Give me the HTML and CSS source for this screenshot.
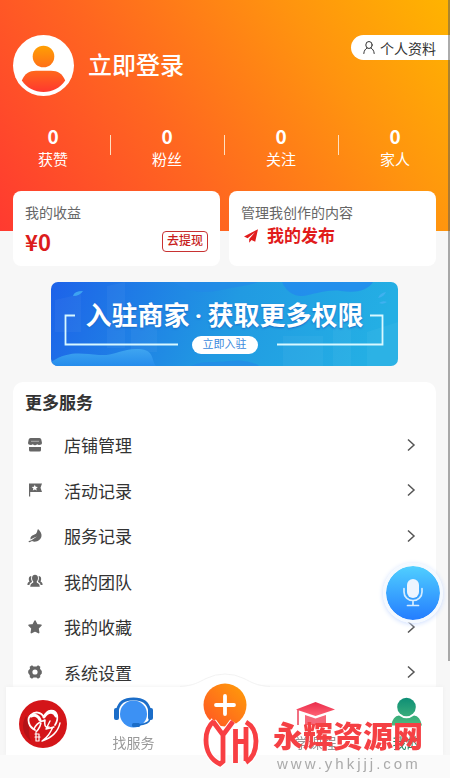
FILE: index.html
```html
<!DOCTYPE html>
<html lang="zh-CN">
<head>
<meta charset="utf-8">
<meta name="viewport" content="width=device-width, initial-scale=1">
<title>我的</title>
<link rel="stylesheet" href="styles.css">
</head>
<body>
<header class="hero">
  <div class="account">
    <svg class="avatar" viewBox="0 0 61 61" aria-hidden="true">
      <defs><linearGradient id="warm" x1="0" y1="0" x2="0" y2="61" gradientUnits="userSpaceOnUse"><stop offset=".2" stop-color="#ff9d05"/><stop offset=".9" stop-color="#ff3c2d"/></linearGradient></defs>
      <circle cx="30.500" cy="30.500" r="30.500" fill="#fff"/>
      <circle cx="30.500" cy="21.500" r="10.800" fill="url(#warm)"/>
      <path d="M8.800 45.500C12 38.500 16 35.800 23 35.800H38C45 35.800 49 38.500 52.200 45.500C47 53 39.500 57 30.500 57S14 53 8.800 45.500Z" fill="url(#warm)"/>
    </svg>
    <a class="login" href="#login">立即登录</a>
    <a class="profile" href="#profile">
      <svg viewBox="0 0 12 13" aria-hidden="true"><g fill="none" stroke="#333" stroke-linecap="round"><ellipse cx="6" cy="4" rx="3.200" ry="3.500"/><path d="M.8 12.500C1 9.500 2.500 7.800 4.200 7M11.200 12.500C11 9.500 9.500 7.800 7.800 7"/></g></svg>
      个人资料
    </a>
  </div>
  <ul class="stats">
    <li><b>0</b><span>获赞</span></li>
    <li><b>0</b><span>粉丝</span></li>
    <li><b>0</b><span>关注</span></li>
    <li><b>0</b><span>家人</span></li>
  </ul>
</header>

<main>
  <div class="cards">
    <section class="card">
      <h2>我的收益</h2>
      <div class="card-row"><strong class="money">¥0</strong><button class="withdraw" type="button">去提现</button></div>
    </section>
    <section class="card">
      <h2>管理我创作的内容</h2>
      <a class="publish" href="#posts">
        <svg viewBox="0 0 14 14" aria-hidden="true"><path d="M14 .3L0 7.500L3.600 9.200L11 3.200L5.200 10V13.800L7.500 11L11.200 12.800Z" fill="#e11b1b"/></svg>
        我的发布
      </a>
    </section>
  </div>

  <section class="banner">
    <svg class="banner-art" viewBox="0 0 347 84" preserveAspectRatio="none" aria-hidden="true">
      <defs>
        <linearGradient id="sea" x1="0" x2="1" y1="0" y2=".1"><stop stop-color="#1d62e9"/><stop offset=".55" stop-color="#219ae2"/><stop offset="1" stop-color="#24afe4"/></linearGradient>
        <linearGradient id="wave" x1="0" x2="0" y1="0" y2="1"><stop stop-color="#3fa5f0"/><stop offset="1" stop-color="#258cec"/></linearGradient>
      </defs>
      <path d="M0 0H347V84H0Z" fill="url(#sea)"/>
      <path d="M4 18L30 12V50H4ZM56 4L74 0V66H56ZM80 26H106V70H80ZM232 54H272V84H232ZM282 40H300V84H282ZM316 50L347 40V84H316Z" fill="#fff" opacity=".04"/>
      <path d="M0 80C18 68 32 72 48 73S72 66 88 67S100 78 105 84H0Z" fill="url(#wave)"/>
      <path d="M122 0C136 10 152 12 170 8S198 4 207 0Z" fill="#2587e9" opacity=".55"/>
      <path d="M231 0C235 9 243 15 252 14S275 7 290 9S316 9 322 0Z" fill="#2389ed" opacity=".8"/>
      <path d="M140 84C152 78 165 81 178 79S205 81 208 84Z" fill="#2587e9" opacity=".6"/>
      <path d="M22 14Q23 9 32 9Q29 14 22 14ZM327 16Q329 11 335 10Q333 15 327 16ZM328 21Q332 18 336 20Q332 23 328 21Z" fill="#46b2f3" opacity=".8"/>
      <path d="M24 33.500H14.500V62.500H127M319 33.500H331.500V62.500H226" fill="none" stroke="#d8f8ff" stroke-width="1.800"/>
    </svg>
    <p class="banner-title">入驻商家<i>·</i>获取更多权限</p>
    <a class="banner-link" href="#join">立即入驻</a>
  </section>

  <section class="services">
    <h2>更多服务</h2>
    <nav class="menu" aria-label="更多服务">
      <a href="#shop"><svg class="glyph" viewBox="0 0 14 14"><path d="M2.500 0H11.500Q13 0 13.300 1.500L14 5Q14 7 12 6.800Q10.500 7.500 9.200 6.300Q7 8 4.800 6.300Q3.500 7.500 2 6.800Q0 7 0 5L.7 1.500Q1 0 2.500 0ZM1 9H13V12Q13 13.500 11.500 13.500H2.500Q1 13.500 1 12Z"/><path d="M3 3.300H11" stroke="#aaa"/></svg>店铺管理<svg class="chevron" viewBox="0 0 8 12"><path d="M1 .5L7 6L1 11.500"/></svg></a>
      <a href="#events"><svg class="glyph" viewBox="0 0 14 14"><path d="M1 .5H14L12.500 4.700L14 9H2.200V13.500H1Z"/><path d="M6.800 1.800L7.700 3.800L9.900 4L8.200 5.400L8.800 7.600L6.800 6.400L4.800 7.600L5.400 5.400L3.700 4L5.900 3.800Z" fill="#fff"/></svg>活动记录<svg class="chevron" viewBox="0 0 8 12"><path d="M1 .5L7 6L1 11.500"/></svg></a>
      <a href="#records"><svg class="glyph" viewBox="0 0 14 14"><path d="M10 0C12 2 14 4.500 13.500 7C13 11 8 14 4 12Q2 13.500 .7 13Q.3 12.500 1 12Q3.500 11.500 6 9.500L9 7.500Q6 8.500 2.500 10.500C2 8 3.500 6.500 6 5.800Q8.500 5 9 3Q9.200 1.500 10 0Z"/></svg>服务记录<svg class="chevron" viewBox="0 0 8 12"><path d="M1 .5L7 6L1 11.500"/></svg></a>
      <a href="#team"><svg class="glyph" viewBox="0 0 14 14"><path d="M7 .7C9 .7 10 2 10 4C10 6 9.300 7 8.600 7.700Q8.600 8.700 10 9.200Q11.700 9.800 11.800 12.700H2.200Q2.300 9.800 4 9.200Q5.400 8.700 5.400 7.700C4.700 7 4 6 4 4C4 2 5 .7 7 .7ZM3.300 2Q2.500 5 4 7.800Q3.800 8.400 2.700 8.800Q1.700 9.300 1.400 11H-.6Q-.6 8.700 .3 8.300Q1.600 7.900 1.400 7.200C.5 6 .3 2 3.300 2ZM10.700 2Q11.500 5 10 7.800Q10.200 8.400 11.300 8.800Q12.300 9.300 12.600 11H14.600Q14.600 8.700 13.700 8.300Q12.400 7.900 12.600 7.200C13.500 6 13.700 2 10.700 2Z"/></svg>我的团队<svg class="chevron" viewBox="0 0 8 12"><path d="M1 .5L7 6L1 11.500"/></svg></a>
      <a href="#favorites"><svg class="glyph" viewBox="0 0 14 14"><path d="M7 1L8.800 4.700L13 5.300L10 8.300L10.700 12.700L7 10.800L3.300 12.700L4 8.300L1 5.300L5.200 4.700Z" stroke="#666" stroke-width="1.500" stroke-linejoin="round"/></svg>我的收藏<svg class="chevron" viewBox="0 0 8 12"><path d="M1 .5L7 6L1 11.500"/></svg></a>
      <a href="#settings"><svg class="glyph" viewBox="0 0 14 14"><path fill-rule="evenodd" d="M4 .3L5.500 1.500H8.500L10 .3L12.300 1.700L12 3.700L13.800 6V8.500L12.200 10.200V12.300L10 13.700L8.500 12.500H5.500L4 13.700L1.800 12.300V10.200L.2 8V5.800L2 3.700L1.700 1.700ZM7 4.400A2.600 2.600 0 1 0 7 9.600A2.600 2.600 0 1 0 7 4.400Z"/></svg>系统设置<svg class="chevron" viewBox="0 0 8 12"><path d="M1 .5L7 6L1 11.500"/></svg></a>
    </nav>
  </section>
</main>

<div class="scroll-thumb"></div>

<button class="voice" type="button" aria-label="语音">
  <svg viewBox="0 0 20 28" aria-hidden="true"><rect x="4" y="0" width="12" height="19" rx="6" fill="#edf5ff"/><path d="M1 9.500V13A9 8.500 0 0 0 19 13V9.500M10 21.500V26M4.500 26.500H15.500" fill="none" stroke="#d5edff" stroke-width="1.700" stroke-linecap="round"/></svg>
</button>

<nav class="tabs" aria-label="主导航">
  <svg class="hump" viewBox="0 0 90 16" aria-hidden="true"><path d="M0 14C14 13 18 10 26 6Q35 1.500 45 1.500T64 6C72 10 76 13 90 14V16H0Z" fill="#fff"/><path d="M0 13.500C14 12.500 18 9.500 26 5.500Q35 1 45 1T64 5.500C72 9.500 76 12.500 90 13.500" fill="none" stroke="#f2f2f2"/></svg>
  <div class="tab-grid">
    <a class="tab tab-brand" href="#home" aria-label="首页">
      <svg viewBox="0 0 48 48" aria-hidden="true"><circle cx="24" cy="24" r="24" fill="#d41519"/><path d="M7 16A18 18 0 0 0 12 41C8 32 13 27 7 16Z" fill="#9f1015" opacity=".6"/>
      <g fill="none" stroke="#fff" stroke-linecap="round" stroke-linejoin="round"><path d="M16 30C10 27 7 19 12 15C16 11 22 12 25 17C28 9 36 9 38 15C39 19 38 22 36 25" stroke-width="1.800"/><path d="M12 16C17 14 20 17 21 20M25 17C29 11 35 11 37 16" stroke-width="3"/><path d="M15 29C18 22 22 22 26 20C25 25 26 28 30 27M22 21C22 26 20 29 17 32" stroke-width="1.600"/><path d="M31 21L27 29L35 27M41 23C39 32 32 38 23 41C29 37 31 33 34 27" stroke-width="1.400"/><path d="M17 33V41M20 34V41M16 34H20M16 37H21M17 41H20" stroke-width="1.200"/></g></svg>
    </a>
    <a class="tab" href="#find">
      <svg class="tab-icon" viewBox="0 0 39 32" aria-hidden="true"><circle cx="19.500" cy="17" r="13.500" fill="#3c91f4"/><path d="M3.500 13C5 5 11 1.800 19.500 1.800S34 5 35.500 13" fill="none" stroke="#1b6dc8" stroke-width="2.800"/><rect x="0" y="11" width="5" height="12" rx="2" fill="#1b6dc8"/><rect x="34" y="11" width="5" height="12" rx="2" fill="#1b6dc8"/><path d="M36 22Q35 27 24 28" fill="none" stroke="#1b6dc8" stroke-width="1.500"/><rect x="18" y="26" width="8" height="4" rx="1.500" fill="#1b6dc8"/></svg>
      <span>找服务</span>
    </a>
    <a class="tab tab-add" href="#add" aria-label="发布">
      <svg viewBox="0 0 44 44" aria-hidden="true"><defs><linearGradient id="add" x1="1" x2="0" y1="0" y2="1"><stop stop-color="#ff9f08"/><stop offset="1" stop-color="#ff5425"/></linearGradient></defs><circle cx="22" cy="22" r="21.500" fill="url(#add)"/><path d="M22 13V31M13 22H31" stroke="#fff" stroke-width="3.800" stroke-linecap="round"/></svg>
    </a>
    <a class="tab" href="#learn">
      <svg class="tab-icon" viewBox="0 0 39 32" aria-hidden="true"><defs><linearGradient id="cap" x1="0" x2="0" y1="0" y2="1"><stop stop-color="#e92d4b"/><stop offset="1" stop-color="#ff6173"/></linearGradient></defs><path d="M19.500 5L39 12.500L19.500 19L0 12.500Z" fill="url(#cap)"/><path d="M9 18L19.500 21.500L30 18V28H9Z" fill="#f5687a"/><path d="M2 13V28" stroke="#ed4058" stroke-width="1.500"/></svg>
      <span>学课程</span>
    </a>
    <a class="tab tab-current" href="#me" aria-current="page">
      <svg class="tab-icon" viewBox="0 0 39 32" aria-hidden="true"><defs><linearGradient id="me" x1="0" x2="0" y1="0" y2="32" gradientUnits="userSpaceOnUse"><stop stop-color="#0c8d75"/><stop offset="1" stop-color="#55c27f"/></linearGradient></defs><circle cx="19.500" cy="10" r="9.300" fill="url(#me)"/><path d="M4 28.500Q6 19 12 18.500Q19.500 24 27 18.500Q33 19 35 28.500Z" fill="url(#me)"/></svg>
      <span>我的</span>
    </a>
  </div>
</nav>

<aside class="brand-mark">
  <svg viewBox="0 0 56 50" aria-hidden="true">
    <defs><g id="emblem" fill="none"><path d="M11 3C5 8 3 14 3 22C3 33 8 42 17 46L20 43.500V18M10 3.500L20 17L30 3.500M32.500 11V45M32.500 23.500H43M43 9V43"/><path d="M43 4C50 8 53 14 53 23S50 40 43 44.500"/></g></defs>
    <use href="#emblem" stroke="#fff" stroke-width="7"/>
    <use href="#emblem" stroke="#f83f43" stroke-width="4.800"/>
  </svg>
  <div><strong>永辉资源网</strong><small>www.yhkjjj.com</small></div>
</aside>
</body>
</html>
```
FILE: styles.css
```css
* { box-sizing: border-box; }

body {
  margin: 0;
  min-height: 100vh;
  overflow: hidden;
  background: #f7f7f7;
  color: #333;
  font-family: Roboto, "Noto Sans CJK SC", sans-serif;
}

a { color: inherit; text-decoration: none; }
h2, p, ul { margin: 0; padding: 0; }
button { font: inherit; cursor: pointer; }
svg { display: block; flex: none; overflow: visible; }

.hero {
  height: 231px;
  padding-top: 35px;
  overflow: hidden;
  background: linear-gradient(56deg, #ff3a30 0%, #ff6620 38%, #ff930f 72%, #ffb400 100%);
  color: #fff;
}

.account { display: flex; align-items: center; gap: 14px; padding-left: 13px; }
.avatar { width: 61px; height: 61px; }
.login { font-size: 24px; line-height: 32px; font-weight: 500; }

.profile {
  display: flex;
  align-items: center;
  align-self: flex-start;
  gap: 5px;
  height: 25px;
  margin-left: auto;
  padding: 0 14px 0 12px;
  border-radius: 13px 0 0 13px;
  background: #fff;
  color: #333;
  font-size: 14px;
}
.profile svg { width: 12px; height: 13px; }

.stats {
  display: grid;
  grid-template-columns: repeat(4, 1fr);
  margin: 28px -2px 0 -4px;
  list-style: none;
  text-align: center;
}
.stats li { position: relative; display: grid; }
.stats li + li::before {
  content: "";
  position: absolute;
  left: 0;
  top: 11px;
  width: 1px;
  height: 20px;
  background: #ffe0c0;
}
.stats b { font-family: "Noto Sans CJK SC", sans-serif; font-size: 19px; line-height: 24px; }
.stats span { font-size: 15px; line-height: 25px; }

main { padding: 0 14px 0 13px; }

.cards { display: grid; grid-template-columns: 1fr 1fr; gap: 9px; margin-top: -40px; }
.card { height: 75px; padding: 11px 12px; border-radius: 8px; background: #fff; }
.card h2 { color: #666; font-size: 14px; line-height: 22px; font-weight: 400; }
.card-row { display: flex; align-items: center; justify-content: space-between; height: 34px; }
.money { color: #dc1c1c; font-family: "Noto Sans CJK SC", sans-serif; font-size: 22px; line-height: 32px; }
.withdraw {
  height: 21px;
  padding: 0 4px;
  border: 1px solid #c83232;
  border-radius: 4px;
  background: #fff;
  color: #c81e1e;
  font-size: 12px;
  line-height: 19px;
  font-weight: 500;
}
.publish { display: flex; align-items: center; gap: 9px; height: 24px; padding-left: 3px; color: #e11b1b; font-size: 17px; line-height: 22px; font-weight: 700; }
.publish svg { width: 14px; height: 14px; }

.banner {
  position: relative;
  display: flex;
  flex-direction: column;
  align-items: center;
  height: 84px;
  margin: 16px 38px;
  padding-top: 14px;
  overflow: hidden;
  border-radius: 7px;
  color: #fff;
}
.banner-art { position: absolute; inset: 0; width: 100%; height: 100%; }
.banner-title { position: relative; font-size: 26px; line-height: 40px; font-weight: 700; white-space: nowrap; text-shadow: 0 1px 2px #176ac8; }
.banner-title i { display: inline-block; width: 18px; text-align: center; font-style: normal; }
.banner-link {
  position: relative;
  padding: 0 11px;
  border-radius: 9px;
  background: #fff;
  color: #3989dc;
  font-size: 11px;
  line-height: 18px;
}

.services { padding-top: 6px; border-radius: 10px; background: #fff; }
.services h2 { padding: 0 12px; font-size: 17px; line-height: 30px; font-weight: 700; }
.menu { display: grid; grid-auto-rows: 1fr; height: 273px; margin-top: 4px; }
.menu a { display: flex; align-items: center; padding: 0 21px 0 15px; font-size: 17px; }
.glyph { width: 14px; height: 14px; margin-right: 22px; fill: #666; }
.chevron { width: 8px; height: 12px; margin-left: auto; fill: none; stroke: #555; stroke-width: 1.5; }

.scroll-thumb { position: fixed; top: 0; right: 0; width: 2px; height: 85vh; background: rgba(90, 90, 90, .5); }

.voice {
  position: fixed;
  right: 7px;
  bottom: 155px;
  display: grid;
  place-items: center;
  width: 60px;
  height: 60px;
  padding: 0;
  border: 3px solid #f4f9ff;
  border-radius: 50%;
  background: linear-gradient(#50cfff, #247dff) padding-box;
  box-shadow: 0 1px 5px #cbdcff;
}
.voice svg { width: 20px; height: 28px; }

.tabs { position: fixed; left: 6px; right: 7px; bottom: 23px; height: 68px; background: #fff; box-shadow: 0 0 4px #eee; }
.tabs::after { content: ""; position: absolute; left: -6px; right: -7px; top: 100%; height: 23px; background: #fafafa; }
.hump { position: absolute; left: 50%; bottom: 66px; width: 90px; height: 16px; margin-left: -45px; }
.tab-grid { position: relative; display: grid; grid-template-columns: repeat(5, 1fr); height: 100%; margin: 0 -9px; }
.tab { display: flex; flex-direction: column; align-items: center; padding-top: 10px; color: #999; font-size: 14px; line-height: 20px; }
.tab-icon { width: 39px; height: 32px; margin-bottom: 4px; }
.tab-brand { padding-top: 13px; }
.tab-brand svg { width: 48px; height: 48px; }
.tab-add { margin-top: -4px; padding-top: 0; }
.tab-add svg { width: 44px; height: 44px; }
.tab-current { color: #248b68; }

.brand-mark { position: fixed; right: 27px; bottom: 6px; display: flex; gap: 14px; pointer-events: none; }
.brand-mark svg { width: 56px; height: 50px; }
.brand-mark div { display: grid; align-content: start; }
.brand-mark strong { color: #f54044; font-size: 30px; line-height: 38px; font-weight: 900; white-space: nowrap; }
.brand-mark small { padding-left: 4px; color: #aaa; font-family: "Liberation Sans", sans-serif; font-size: 15px; line-height: 16px; letter-spacing: 3px; }
```
